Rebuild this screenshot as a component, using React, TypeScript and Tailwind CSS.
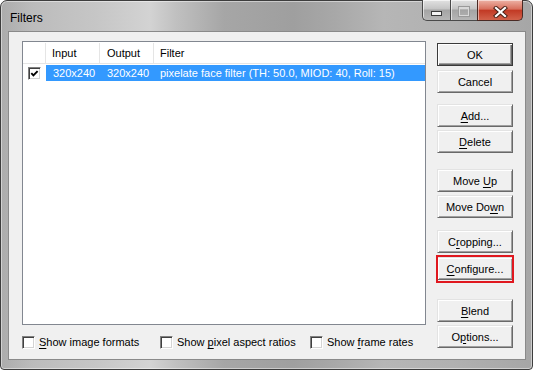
import clsx from 'clsx'
import type { ReactNode } from 'react'

function Key({ children }: { children: ReactNode }) {
  return <span className="underline decoration-1 underline-offset-[2px]">{children}</span>
}

type WinButtonProps = {
  children: ReactNode
  className?: string
  isDefault?: boolean
  highlighted?: boolean
}

function WinButton({ children, className, isDefault = false, highlighted = false }: WinButtonProps) {
  return (
    <div className={clsx('relative', className)}>
      <button
        type="button"
        className={clsx(
          'flex h-[23px] w-[76px] items-center justify-center bg-[#f0f0f0] pt-px text-[11px] leading-none text-black',
          isDefault
            ? 'border border-[#3a3a3a] shadow-[inset_1px_1px_0_#fff,inset_-1px_-1px_0_#696969,inset_-2px_-2px_0_#a0a0a0]'
            : 'border border-t-[#e3e3e3] border-l-[#e3e3e3] border-r-[#696969] border-b-[#696969] shadow-[inset_1px_1px_0_#fff,inset_-1px_-1px_0_#a0a0a0]',
        )}
      >
        {children}
      </button>
      {highlighted ? (
        <div className="pointer-events-none absolute -top-[2px] -bottom-[3px] -left-px -right-px border-2 border-[#e0181f]" />
      ) : null}
    </div>
  )
}

function CheckBox({ checked = false }: { checked?: boolean }) {
  return (
    <div className="flex h-[13px] w-[13px] shrink-0 items-center justify-center border border-t-[#808080] border-l-[#808080] border-r-white border-b-white bg-white shadow-[inset_1px_1px_0_#404040,inset_-1px_-1px_0_#d4d4d4]">
      {checked ? (
        <svg width="9" height="9" viewBox="0 0 9 9">
          <polyline points="1.3,4.2 3.4,6.4 7.6,2.1" fill="none" stroke="#000" strokeWidth="1.9" />
        </svg>
      ) : null}
    </div>
  )
}

function TitleButtons() {
  return (
    <div className="mr-[9px] -mt-px flex h-[21px] self-start">
      <div className="flex w-[28px] items-start justify-center rounded-bl-[5px] border-b border-l border-[#4a4a4a] bg-[linear-gradient(180deg,#e2e2e2_0%,#c4c4c4_45%,#a4a4a4_50%,#b6b6b6_100%)] shadow-[inset_1px_1px_0_rgba(255,255,255,0.6)]">
        <div className="mt-[11px] h-[5px] w-[11px] border border-[#3a3a3a] bg-[#f4f4f4]" />
      </div>
      <div className="flex w-[27px] items-start justify-center border-b border-l border-[#4a4a4a] bg-[linear-gradient(180deg,#e2e2e2_0%,#c4c4c4_45%,#a4a4a4_50%,#b6b6b6_100%)] shadow-[inset_1px_1px_0_rgba(255,255,255,0.6)]">
        <div className="mt-[7px] h-[9px] w-[10px] border border-[#d8d8d8] border-t-2 shadow-[0_0_0_1px_#9a9a9a]" />
      </div>
      <div className="flex w-[46px] items-start justify-center rounded-br-[5px] border-b border-l border-r border-[#4a2a24] bg-[linear-gradient(180deg,#edb3a6_0%,#d8705d_45%,#c23a25_52%,#d2624b_100%)] shadow-[inset_1px_1px_0_rgba(255,255,255,0.5)]">
        <svg className="mt-[6px]" width="15" height="12" viewBox="0 0 15 12">
          <path d="M3 2 L12 10 M12 2 L3 10" stroke="#4b2218" strokeWidth="4.2" strokeLinecap="square" />
          <path d="M3 2 L12 10 M12 2 L3 10" stroke="#ffffff" strokeWidth="2.2" strokeLinecap="square" />
        </svg>
      </div>
    </div>
  )
}

function FilterList() {
  return (
    <div className="flex h-[284px] w-[404px] flex-col border border-[#828790] bg-white">
      <div className="flex h-[22px] shrink-0 border-b border-[#e5e5e5] pt-px text-[11px]">
        <div className="w-[23px] border-r border-[#e5e5e5]" />
        <div className="flex w-[54px] items-center border-r border-[#e5e5e5] pl-[6px]">Input</div>
        <div className="flex w-[54px] items-center border-r border-[#e5e5e5] pl-[7px]">Output</div>
        <div className="flex flex-1 items-center pl-[6px]">Filter</div>
      </div>
      <div className="mt-[1px] flex h-[16px] text-[11px]">
        <div className="flex w-[23px] items-center pl-[5px]">
          <CheckBox checked />
        </div>
        <div className="flex flex-1 items-center whitespace-nowrap bg-[#3399ff] text-white">
          <span className="w-[54px] pl-[7px]">320x240</span>
          <span className="w-[54px] pl-[7px]">320x240</span>
          <span className="pl-[6px]">pixelate face filter (TH: 50.0, MIOD: 40, Roll: 15)</span>
        </div>
      </div>
    </div>
  )
}

export default function App() {
  return (
    <div className="flex h-[370px] w-[533px] flex-col rounded-t-[7px] rounded-b-[4px] border border-[#3d3d3d] bg-[linear-gradient(90deg,#acacac_0%,#bcbcbc_6%,#c6c6c6_18%,#d3d3d3_28%,#c0c0c0_33%,#a6a6a6_42%,#9f9f9f_55%,#a8a8a8_63%,#b6b6b6_72%,#b1b1b1_85%,#a6a6a6_100%)] font-['Liberation_Sans',Arial,sans-serif] text-black shadow-[inset_0_0_0_1px_rgba(255,255,255,0.45)]">
      <div className="flex h-[30px] shrink-0 items-start justify-between">
        <span className="ml-[9px] mt-[10px] text-[12px] leading-[14px]">Filters</span>
        <TitleButtons />
      </div>
      <div className="ml-[7px] flex h-[329px] w-[518px] gap-[11px] border border-[#8a8a8a] bg-[#f0f0f0] pl-[13px] pr-[12px] pt-[9px]">
        <div className="flex flex-col">
          <FilterList />
          <div className="mt-[11px] flex h-[13px] items-center text-[11px]">
            <div className="flex w-[138px] items-center gap-[4px]">
              <CheckBox />
              <span>
                <Key>S</Key>how image formats
              </span>
            </div>
            <div className="flex w-[150px] items-center gap-[4px]">
              <CheckBox />
              <span>
                Show <Key>p</Key>ixel aspect ratios
              </span>
            </div>
            <div className="flex items-center gap-[4px]">
              <CheckBox />
              <span>
                Show <Key>f</Key>rame rates
              </span>
            </div>
          </div>
        </div>
        <div className="flex w-[76px] flex-col">
          <WinButton className="mt-[2px]" isDefault>
            OK
          </WinButton>
          <WinButton className="mt-[4px]">Cancel</WinButton>
          <WinButton className="mt-[11px]">
            <span>
              <Key>A</Key>dd...
            </span>
          </WinButton>
          <WinButton className="mt-[3px]">
            <span>
              <Key>D</Key>elete
            </span>
          </WinButton>
          <WinButton className="mt-[16px]">
            <span>
              Move <Key>U</Key>p
            </span>
          </WinButton>
          <WinButton className="mt-[3px]">
            <span>
              Move Do<Key>w</Key>n
            </span>
          </WinButton>
          <WinButton className="mt-[12px]">
            <span>
              C<Key>r</Key>opping...
            </span>
          </WinButton>
          <WinButton className="mt-[4px]" highlighted>
            <span>
              <Key>C</Key>onfigure...
            </span>
          </WinButton>
          <WinButton className="mt-[19px]">
            <span>
              <Key>B</Key>lend
            </span>
          </WinButton>
          <WinButton className="mt-[3px]">
            <span>
              O<Key>p</Key>tions...
            </span>
          </WinButton>
        </div>
      </div>
    </div>
  )
}
